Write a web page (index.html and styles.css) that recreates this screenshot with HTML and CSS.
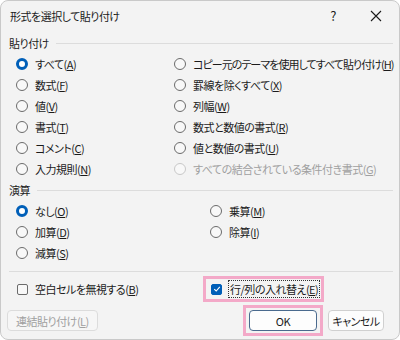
FILE: index.html
```html
<!DOCTYPE html>
<html lang="ja">
<head>
    <meta charset="UTF-8">
    <title>形式を選択して貼り付け</title>
    <link rel="stylesheet" href="styles.css">
</head>
<body>
    <div class="dialog">
        <div class="titlebar">
            <span class="title">形式を選択して貼り付け</span>
            <span class="help">?</span>
            <span class="close">
                <svg width="12" height="12" viewBox="0 0 12 12"><path d="M1 1 L11 11 M11 1 L1 11" stroke="#1a1a1a" stroke-width="1.1" fill="none"/></svg>
            </span>
        </div>

        <div class="group-head"><span>貼り付け</span></div>
        <div class="options paste">
            <label class="opt"><span class="radio checked"></span>すべて(<u>A</u>)</label>
            <label class="opt tight"><span class="radio"></span>コピー元のテーマを使用してすべて貼り付け(<u>H</u>)</label>
            <label class="opt"><span class="radio"></span>数式(<u>F</u>)</label>
            <label class="opt"><span class="radio"></span>罫線を除くすべて(<u>X</u>)</label>
            <label class="opt"><span class="radio"></span>値(<u>V</u>)</label>
            <label class="opt"><span class="radio"></span>列幅(<u>W</u>)</label>
            <label class="opt"><span class="radio"></span>書式(<u>T</u>)</label>
            <label class="opt"><span class="radio"></span>数式と数値の書式(<u>R</u>)</label>
            <label class="opt"><span class="radio"></span>コメント(<u>C</u>)</label>
            <label class="opt"><span class="radio"></span>値と数値の書式(<u>U</u>)</label>
            <label class="opt"><span class="radio"></span>入力規則(<u>N</u>)</label>
            <label class="opt disabled"><span class="radio"></span>すべての結合されている条件付き書式(<u>G</u>)</label>
        </div>

        <div class="group-head calc"><span>演算</span></div>
        <div class="options ops">
            <label class="opt"><span class="radio checked"></span>なし(<u>O</u>)</label>
            <label class="opt"><span class="radio"></span>乗算(<u>M</u>)</label>
            <label class="opt"><span class="radio"></span>加算(<u>D</u>)</label>
            <label class="opt"><span class="radio"></span>除算(<u>I</u>)</label>
            <label class="opt"><span class="radio"></span>減算(<u>S</u>)</label>
        </div>

        <div class="separator"></div>

        <div class="checks">
            <label class="opt"><span class="check"></span>空白セルを無視する(<u>B</u>)</label>
            <label class="opt mark">
                <span class="check on">
                    <svg width="8" height="8" viewBox="0 0 8 8"><path d="M1.2 4.2 L3.2 6 L6.8 1.8" stroke="#fff" stroke-width="1.1" fill="none"/></svg>
                </span>
                <span class="focus">行/列の入れ替え(<u>E</u>)</span>
            </label>
        </div>

        <div class="buttons">
            <button class="btn" disabled>連結貼り付け(<u>L</u>)</button>
            <div class="spacer"></div>
            <div class="mark-btn"><button class="btn default">OK</button></div>
            <button class="btn cancel">キャンセル</button>
        </div>
    </div>
</body>
</html>
```

FILE: styles.css
```css
:root {
    --bg: #f3f3f3;
    --text: #1b1b1b;
    --accent: #005fb8;
    --line: #dcdcdc;
    --pink: #f3a9c8;
}

* {
    margin: 0;
    padding: 0;
    box-sizing: border-box;
}

body {
    width: 400px;
    height: 340px;
    background: #fff;
    font-family: "Noto Sans CJK JP", "Noto Sans", sans-serif;
    font-feature-settings: "palt";
    font-size: 11px;
    letter-spacing: -0.5px;
    color: var(--text);
}

.dialog {
    width: 400px;
    height: 340px;
    background: var(--bg);
    border: 1px solid #c9c9c9;
    border-radius: 8px;
    overflow: hidden;
}

.titlebar {
    height: 29px;
    display: flex;
    align-items: center;
    padding-left: 9px;
}

.title {
    flex: 1;
}

.help {
    width: 20px;
    margin-right: 27px;
    text-align: center;
    font-size: 13px;
}

.close {
    width: 14px;
    margin-right: 15px;
    display: flex;
    align-items: center;
}

.group-head {
    display: flex;
    align-items: center;
    gap: 7px;
    height: 20px;
    margin-top: 3px;
    padding: 0 6px 0 8px;
}

.group-head::after {
    content: "";
    flex: 1;
    height: 1px;
    background: var(--line);
}

.group-head.calc {
    margin-top: 1px;
}

.options {
    display: grid;
    padding-left: 15px;
}

.paste {
    grid-template-columns: 158px 1fr;
}

.ops {
    grid-template-columns: 194px 1fr;
}

.opt {
    display: flex;
    align-items: center;
    height: 21px;
    white-space: nowrap;
}

.opt.tight {
    letter-spacing: -0.95px;
}

.opt u {
    text-underline-offset: 1px;
}

.radio {
    width: 12px;
    height: 12px;
    border-radius: 50%;
    border: 1px solid #6b6b6b;
    background: #f8f8f8;
    margin-right: 7px;
    flex-shrink: 0;
}

.radio.checked {
    border: 3.5px solid var(--accent);
    background: #fff;
}

.opt.disabled {
    color: #a0a0a0;
}

.opt.disabled .radio {
    border-color: #c8c8c8;
}

.separator {
    height: 1px;
    background: var(--line);
    margin: 8px 6px 0 8px;
}

.checks {
    display: flex;
    align-items: center;
    height: 32px;
    margin-top: 1px;
    padding-left: 16px;
}

.checks .opt:first-child {
    width: 186px;
}

.check {
    width: 11px;
    height: 11px;
    border: 1px solid #6b6b6b;
    border-radius: 2px;
    background: #f8f8f8;
    margin-right: 7px;
    display: flex;
    align-items: center;
    justify-content: center;
}

.check.on {
    background: var(--accent);
    border-color: var(--accent);
}

.mark {
    height: 26px;
    padding: 0 2px 0 5px;
    border: 3px solid var(--pink);
}

.focus {
    outline: 1px dotted #333;
    padding: 0 1px;
    line-height: 16px;
}

.buttons {
    display: flex;
    align-items: center;
    padding: 0 15px 0 6px;
}

.spacer {
    flex: 1;
}

.btn {
    font-family: inherit;
    font-feature-settings: "palt";
    font-size: 11px;
    letter-spacing: -0.5px;
    color: var(--text);
    height: 21px;
    padding: 0 8px;
    background: #fdfdfd;
    border: 1px solid #d0d0d0;
    border-radius: 4px;
}

.btn:disabled {
    color: #a0a0a0;
    background: #f6f6f6;
    border-color: #dcdcdc;
}

.mark-btn {
    border: 3px solid var(--pink);
    padding: 2px 3px;
    margin-right: 5px;
}

.btn.default {
    width: 68px;
    border-color: #4a6a8e;
}

.btn.cancel {
    width: 56px;
    padding: 0;
}
```
